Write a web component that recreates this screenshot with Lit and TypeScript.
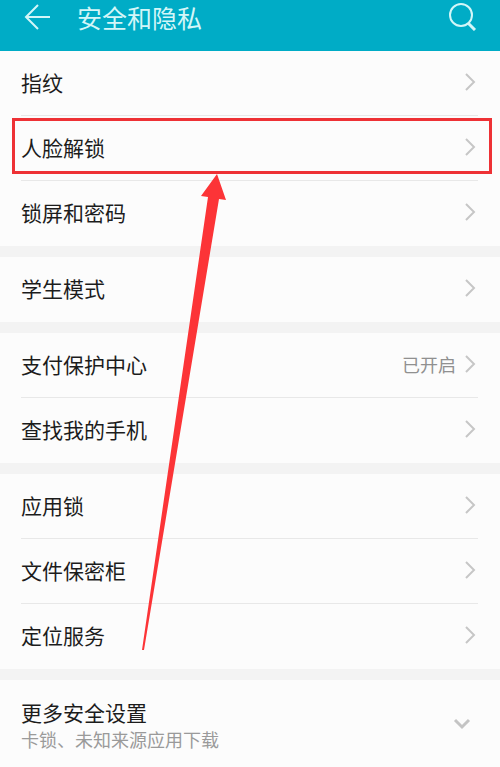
import { LitElement, html, css, svg, nothing } from "lit";
import { customElement, property } from "lit/decorators.js";

interface Entry {
  label: string;
  value?: string;
  marked?: boolean;
}

const groups: Entry[][] = [
  [{ label: "指纹" }, { label: "人脸解锁", marked: true }, { label: "锁屏和密码" }],
  [{ label: "学生模式" }],
  [{ label: "支付保护中心", value: "已开启" }, { label: "查找我的手机" }],
  [{ label: "应用锁" }, { label: "文件保密柜" }, { label: "定位服务" }],
];

const chevronRight = svg`<path d="M2 2 L10 10 L2 18" fill="none" stroke="#c6c6c6" stroke-width="2"/>`;

@customElement("settings-row")
class SettingsRow extends LitElement {
  @property() label = "";
  @property() value = "";

  static styles = css`
    :host {
      display: block;
      position: relative;
      padding: 0 22px 0 21px;
    }
    .row {
      display: flex;
      align-items: center;
      box-sizing: border-box;
      width: 100%;
      height: 65px;
      padding: 0 2px 2px 0;
      border: 0;
      border-bottom: 1px solid #e8e8e8;
      background: none;
      font: inherit;
      color: #1c1c1c;
      text-align: left;
    }
    :host([last]) .row {
      border-bottom-color: transparent;
    }
    .label {
      flex: 1;
      font-size: 21px;
      line-height: 26px;
    }
    .value {
      font-size: 18px;
      line-height: 26px;
      color: #909090;
      margin-right: 8px;
    }
    .chevron {
      width: 12px;
      height: 20px;
      flex: none;
    }
  `;

  render() {
    return html`<button class="row" type="button">
        <span class="label">${this.label}</span>
        ${this.value ? html`<span class="value">${this.value}</span>` : nothing}
        <svg class="chevron" viewBox="0 0 12 20" aria-hidden="true">${chevronRight}</svg>
      </button>
      <slot></slot>`;
  }
}

@customElement("app-root")
class AppRoot extends LitElement {
  static styles = css`
    :host {
      display: block;
      min-height: 100vh;
      background: #fcfcfc;
      font-family: "Noto Sans CJK SC", sans-serif;
    }
    .bar {
      display: flex;
      align-items: flex-start;
      box-sizing: border-box;
      height: 51px;
      padding: 0 23px;
      background: #00acc6;
      color: #d3f6f8;
    }
    .icon-button {
      display: flex;
      padding: 3px 0 0;
      border: 0;
      background: none;
      color: inherit;
    }
    .icon {
      width: 28px;
      height: 28px;
    }
    .title {
      flex: 1;
      margin: 0 0 0 26px;
      font-size: 25px;
      line-height: 34px;
      font-weight: 400;
    }
    .group + .group,
    .more {
      border-top: 11px solid #f3f3f3;
    }
    .frame {
      position: absolute;
      inset: 2px 8px 7px 12px;
      border: 3px solid #ee3135;
      pointer-events: none;
    }
    .arrow {
      position: absolute;
      z-index: 1;
      top: 58px;
      left: 140px;
      width: 90px;
      height: 480px;
      pointer-events: none;
    }
    .more {
      display: flex;
      align-items: flex-start;
      box-sizing: border-box;
      width: 100%;
      border-width: 11px 0 0;
      padding: 19px 29px 14px 21px;
      background: none;
      font: inherit;
      text-align: left;
    }
    .more-text {
      flex: 1;
      display: flex;
      flex-direction: column;
    }
    .more-label {
      font-size: 21px;
      line-height: 27px;
      color: #1c1c1c;
    }
    .more-note {
      font-size: 18px;
      line-height: 26px;
      color: #9a9a9a;
    }
    .down {
      width: 18px;
      height: 12px;
      margin-top: 19px;
      flex: none;
    }
  `;

  private marks() {
    return html`<div class="frame"></div>
      <svg class="arrow" viewBox="0 0 90 480" aria-hidden="true">
        <path d="M77 0 L86 26 L79 25 L4 476 L2 476 L68 23 L61 22 Z" fill="#fc3437" />
      </svg>`;
  }

  render() {
    return html`
      <header class="bar">
        <button class="icon-button" type="button" aria-label="返回">
          <svg class="icon" viewBox="0 0 28 28" fill="none" stroke="currentColor" stroke-width="2">
            <path d="M27 14 H3 M15 2 L3 14 L15 26" />
          </svg>
        </button>
        <h1 class="title">安全和隐私</h1>
        <button class="icon-button" type="button" aria-label="搜索">
          <svg class="icon" viewBox="0 0 28 28" fill="none" stroke="currentColor" stroke-width="2">
            <circle cx="12" cy="12" r="11" />
            <path d="M19 20 L26 27" stroke-width="3" />
          </svg>
        </button>
      </header>
      <main>
        ${groups.map(
          (group) => html`<section class="group">
            ${group.map(
              (entry, i) => html`<settings-row
                .label=${entry.label}
                .value=${entry.value ?? ""}
                ?last=${i === group.length - 1}
                >${entry.marked ? this.marks() : nothing}</settings-row
              >`
            )}
          </section>`
        )}
        <button class="more" type="button">
          <span class="more-text">
            <span class="more-label">更多安全设置</span>
            <span class="more-note">卡锁、未知来源应用下载</span>
          </span>
          <svg class="down" viewBox="0 0 18 12" aria-hidden="true">
            <path d="M2 2 L9 9 L16 2" fill="none" stroke="#c4c4c4" stroke-width="3" />
          </svg>
        </button>
      </main>
    `;
  }
}
